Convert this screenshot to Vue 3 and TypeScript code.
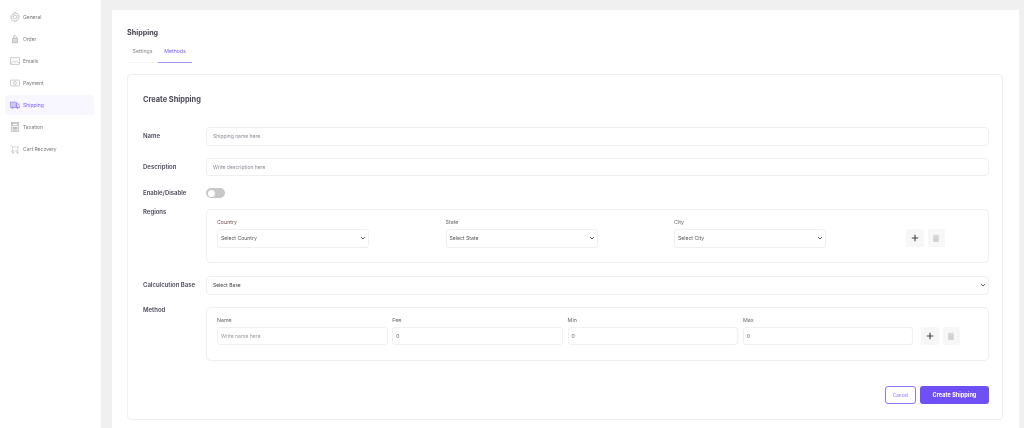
<script setup lang="ts">
const nav = [
  { label: 'General', icon: 'gear' },
  { label: 'Order', icon: 'bag' },
  { label: 'Emails', icon: 'mail' },
  { label: 'Payment', icon: 'pay' },
  { label: 'Shipping', icon: 'truck', active: true },
  { label: 'Taxation', icon: 'tax' },
  { label: 'Cart Recovery', icon: 'cart' },
]
const regions = [
  { label: 'Country', value: 'Select Country', accent: true },
  { label: 'State', value: 'Select State' },
  { label: 'City', value: 'Select City' },
]
const methods = [
  { label: 'Name', value: 'Write name here', ph: true },
  { label: 'Fee', value: '0' },
  { label: 'Min', value: '0' },
  { label: 'Max', value: '0' },
]
</script>

<template>
  <div class="page">
    <aside class="sidebar">
      <div v-for="n in nav" :key="n.label" class="nav-item" :class="{ active: n.active }">
        <svg class="nav-icon" viewBox="0 0 12 12" fill="none" stroke="currentColor" stroke-width="0.7">
          <template v-if="n.icon === 'gear'">
            <circle cx="6" cy="6" r="2.200" />
            <path d="M5 .8h2l.3 1.300 1.200-.5 1.500 1.400-.6 1.200 1.500.5v1.800l-1.500.5.6 1.200L8.500 10.400l-1.200-.6L7 11.200H5l-.4-1.400-1.200.6L2 9l.6-1.200L1 7.300V5.500l1.600-.5L2 3.800l1.400-1.500 1.200.5z" />
          </template>
          <template v-else-if="n.icon === 'bag'">
            <path d="M3.200 5h5.600l.5 5.500H2.700z" fill="currentColor" fill-opacity=".4" />
            <path d="M4.500 5V3.300a1.500 1.500 0 0 1 3 0V5" />
          </template>
          <template v-else-if="n.icon === 'mail'">
            <rect x="0.500" y="2" width="11" height="8" rx="0.600" />
            <path d="M1 9l3.200-3 1.800 1.500L8 6l3 3" />
          </template>
          <template v-else-if="n.icon === 'pay'">
            <rect x="0.500" y="2.500" width="11" height="7" rx="0.800" />
            <circle cx="6" cy="6" r="1.800" />
          </template>
          <template v-else-if="n.icon === 'truck'">
            <rect x="0.500" y="2.500" width="7" height="6.500" fill="currentColor" fill-opacity=".35" />
            <path d="M7.500 4.500h2.500l1.500 2v2.500h-4z" fill="currentColor" fill-opacity=".2" />
            <circle cx="3" cy="9.500" r=".9" />
            <circle cx="9" cy="9.500" r=".9" />
          </template>
          <template v-else-if="n.icon === 'tax'">
            <rect x="1.500" y="0.500" width="9" height="11" />
            <rect x="3" y="2" width="6" height="2.500" />
            <path d="M3 6.500h6M3 8h6M3 9.700h6" stroke-width="1" />
          </template>
          <template v-else>
            <path d="M.5 2h1.500l.8 1.500M9.800 3.500H11M3 3.500h6.500v5H3zM1 8.500h2" stroke-dasharray="1.300 .5" />
            <circle cx="3.500" cy="10.300" r=".8" />
            <circle cx="9" cy="10.300" r=".8" />
          </template>
        </svg>
        <span>{{ n.label }}</span>
      </div>
    </aside>

    <main class="main">
      <section class="sheet">
        <h1 class="page-title">Shipping</h1>
        <div class="tabs">
          <span class="tab">Settings</span>
          <span class="tab tab-active">Methods</span>
        </div>

        <div class="card">
          <h2 class="card-title">Create Shipping</h2>

          <div class="row row-name">
            <label class="row-label">Name</label>
            <div class="field ph">Shipping name here</div>
          </div>
          <div class="row row-desc">
            <label class="row-label">Description</label>
            <div class="field ph">Write description here</div>
          </div>
          <div class="row row-toggle">
            <label class="row-label">Enable/Disable</label>
            <span class="toggle"><span class="knob"></span></span>
          </div>
          <div class="row row-regions">
            <label class="row-label">Regions</label>
            <div class="box region-box">
              <div v-for="r in regions" :key="r.label" class="region-col">
                <div class="mini-label" :class="{ accent: r.accent }">{{ r.label }}</div>
                <div class="select">
                  <span>{{ r.value }}</span>
                  <svg class="chev" viewBox="0 0 10 10" fill="none" stroke="#555" stroke-width="1.200"><path d="M2.500 3.800L5 6.300l2.500-2.500" /></svg>
                </div>
              </div>
              <div class="actions">
                <button class="icon-btn">
                  <svg viewBox="0 0 10 10" stroke="#444" stroke-width="1.100"><path d="M5 1.800v6.400M1.800 5h6.400" /></svg>
                </button>
                <button class="icon-btn">
                  <svg viewBox="0 0 10 10"><path d="M2.800 1.700h4.400a.6.600 0 0 1 .6.6V8a1 1 0 0 1-1 1H3.200a1 1 0 0 1-1-1V2.300a.6.600 0 0 1 .6-.6z" fill="#d2d2d2" /><path d="M2.300 3h5.400" stroke="#f0f0f0" stroke-width=".5" /></svg>
                </button>
              </div>
            </div>
          </div>
          <div class="row row-base">
            <label class="row-label">Calculcution Base</label>
            <div class="field select-wide">
              <span>Select Base</span>
              <svg class="chev" viewBox="0 0 10 10" fill="none" stroke="#555" stroke-width="1.200"><path d="M2.500 3.800L5 6.300l2.500-2.500" /></svg>
            </div>
          </div>
          <div class="row row-method">
            <label class="row-label">Method</label>
            <div class="box method-box">
              <div v-for="m in methods" :key="m.label" class="method-col">
                <div class="mini-label">{{ m.label }}</div>
                <div class="select input" :class="{ 'input-ph': m.ph }">{{ m.value }}</div>
              </div>
              <div class="actions method-actions">
                <button class="icon-btn">
                  <svg viewBox="0 0 10 10" stroke="#444" stroke-width="1.100"><path d="M5 1.800v6.400M1.800 5h6.400" /></svg>
                </button>
                <button class="icon-btn">
                  <svg viewBox="0 0 10 10"><path d="M2.800 1.700h4.400a.6.600 0 0 1 .6.6V8a1 1 0 0 1-1 1H3.200a1 1 0 0 1-1-1V2.300a.6.600 0 0 1 .6-.6z" fill="#d2d2d2" /><path d="M2.300 3h5.400" stroke="#f0f0f0" stroke-width=".5" /></svg>
                </button>
              </div>
            </div>
          </div>

          <div class="footer">
            <button class="btn-cancel">Cancel</button>
            <button class="btn-create">Create Shipping</button>
          </div>
        </div>
      </section>
    </main>
  </div>
</template>

<style>
html, body { margin: 0; overflow: hidden; background: #f0f0f0; }
</style>

<style scoped>
* { box-sizing: border-box; }
.page {
  display: flex;
  width: 1024px;
  height: 428px;
  overflow: hidden;
  font-family: Inter, "Liberation Sans", sans-serif;
  background: #f0f0f0;
  color: #3a3a4a;
  filter: blur(0.35px);
}
.sidebar {
  width: 101px;
  flex: none;
  background: #fff;
  padding: 7px 7px 0 5px;
  display: flex;
  flex-direction: column;
  gap: 2px;
}
.nav-item {
  height: 20px;
  display: flex;
  align-items: center;
  gap: 3px;
  padding-left: 5px;
  border-radius: 4px;
  font-size: 5px;
  color: #777;
}
.nav-icon { width: 10px; height: 10px; flex: none; color: #a5a5a5; }
.nav-item.active { background: #f8f6ff; color: #7c5cfc; }
.nav-item.active .nav-icon { color: #8f74fc; }
.main { flex: 1; padding: 10px 5px 0 11px; min-width: 0; }
.sheet {
  background: #fff;
  height: 440px;
  padding: 16px 15px 0;
}
.page-title {
  margin: 0;
  font-size: 7.200px;
  line-height: 13px;
  font-weight: 700;
  color: #444452;
}
.tabs {
  margin-top: 5px;
  height: 19px;
  display: flex;
  width: 65px;
}
.tab {
  width: 31px;
  text-align: center;
  font-size: 5.200px;
  line-height: 14px;
  color: #888;
  height: 19px;
  border-bottom: 1px solid #f5f5f5;
}
.tab-active {
  width: 34px;
  color: #7c5cfc;
  border-bottom: 1.500px solid #a78ffd;
}
.card {
  margin-top: 11px;
  width: 876px;
  height: 346px;
  border: 1px solid #efefef;
  border-radius: 4px;
  padding: 0 13px 0 15px;
}
.card-title {
  margin: 0;
  padding-top: 19px;
  font-size: 7.400px;
  line-height: 12px;
  font-weight: 700;
  color: #4a4a58;
}
.row { display: flex; align-items: flex-start; }
.row-label {
  width: 63px;
  flex: none;
  font-size: 6px;
  line-height: 10px;
  font-weight: 600;
  color: #4a4a5a;
}
.row-name { margin-top: 21px; }
.row-desc { margin-top: 12px; }
.row-toggle { margin-top: 12px; }
.row-regions { margin-top: 11px; }
.row-base { margin-top: 13px; }
.row-method { margin-top: 12px; }
.row-name .row-label { margin-top: 4px; }
.row-desc .row-label { margin-top: 4px; }
.row-toggle .row-label { margin-top: 0; }
.row-base .row-label { margin-top: 4px; }
.row-method .row-label { margin-top: -2px; }
.row-regions .row-label { margin-top: -2px; }
.field {
  flex: 1;
  height: 18.500px;
  border: 1px solid #efefef;
  border-radius: 4px;
  font-size: 5px;
  display: flex;
  align-items: center;
  padding-left: 6px;
  color: #555;
}
.ph { color: #8a8a96; }
.select-wide { justify-content: space-between; padding-right: 1px; color: #444; }
.toggle {
  width: 19px;
  height: 10px;
  border-radius: 5px;
  background: #c8c8c8;
  padding: 1.500px;
  display: block;
}
.knob { display: block; width: 7px; height: 7px; background: #fff; border-radius: 50%; }
.box {
  flex: 1;
  height: 54px;
  border: 1px solid #efefef;
  border-radius: 5px;
  display: flex;
  padding: 8px 0 0 10px;
}
.region-col { width: 228.500px; flex: none; }
.mini-label {
  font-size: 5.300px;
  line-height: 9px;
  height: 11px;
  color: #666;
}
.mini-label.accent { color: #7a5050; }
.select {
  width: 152px;
  height: 18.500px;
  border: 1px solid #f0f0f0;
  border-radius: 3px;
  font-size: 5.100px;
  padding-left: 3px;
  padding-right: 1px;
  display: flex;
  align-items: center;
  justify-content: space-between;
  color: #555;
}
.chev { width: 8px; height: 8px; flex: none; }
.actions { display: flex; gap: 4px; padding: 11px 0 0 3.500px; }
.icon-btn {
  width: 17.500px;
  height: 18px;
  padding: 3.500px;
  border: 0;
  border-radius: 2px;
  background: #f7f7f7;
  display: flex;
  align-items: center;
  justify-content: center;
}
.icon-btn svg { width: 10px; height: 10px; display: block; }
.method-col { width: 175.300px; flex: none; }
.input { width: 170.500px; padding-left: 3px; }
.input-ph { color: #9a9aa5; }
.method-box { gap: 0; }
.method-actions { padding-left: 3px; }
.footer {
  display: flex;
  justify-content: flex-end;
  gap: 4px;
  margin-top: 25px;
}
.btn-cancel {
  width: 31px;
  height: 18px;
  border: 1px solid #8f74fc;
  border-radius: 3px;
  background: #fff;
  color: #a48efd;
  font: 500 4.700px Inter, sans-serif;
  padding: 0;
}
.btn-create {
  width: 69px;
  height: 18px;
  border: 0;
  border-radius: 3px;
  background: #6f4ff6;
  color: #fff;
  font: 700 5.600px Inter, sans-serif;
  padding: 0;
}
</style>
